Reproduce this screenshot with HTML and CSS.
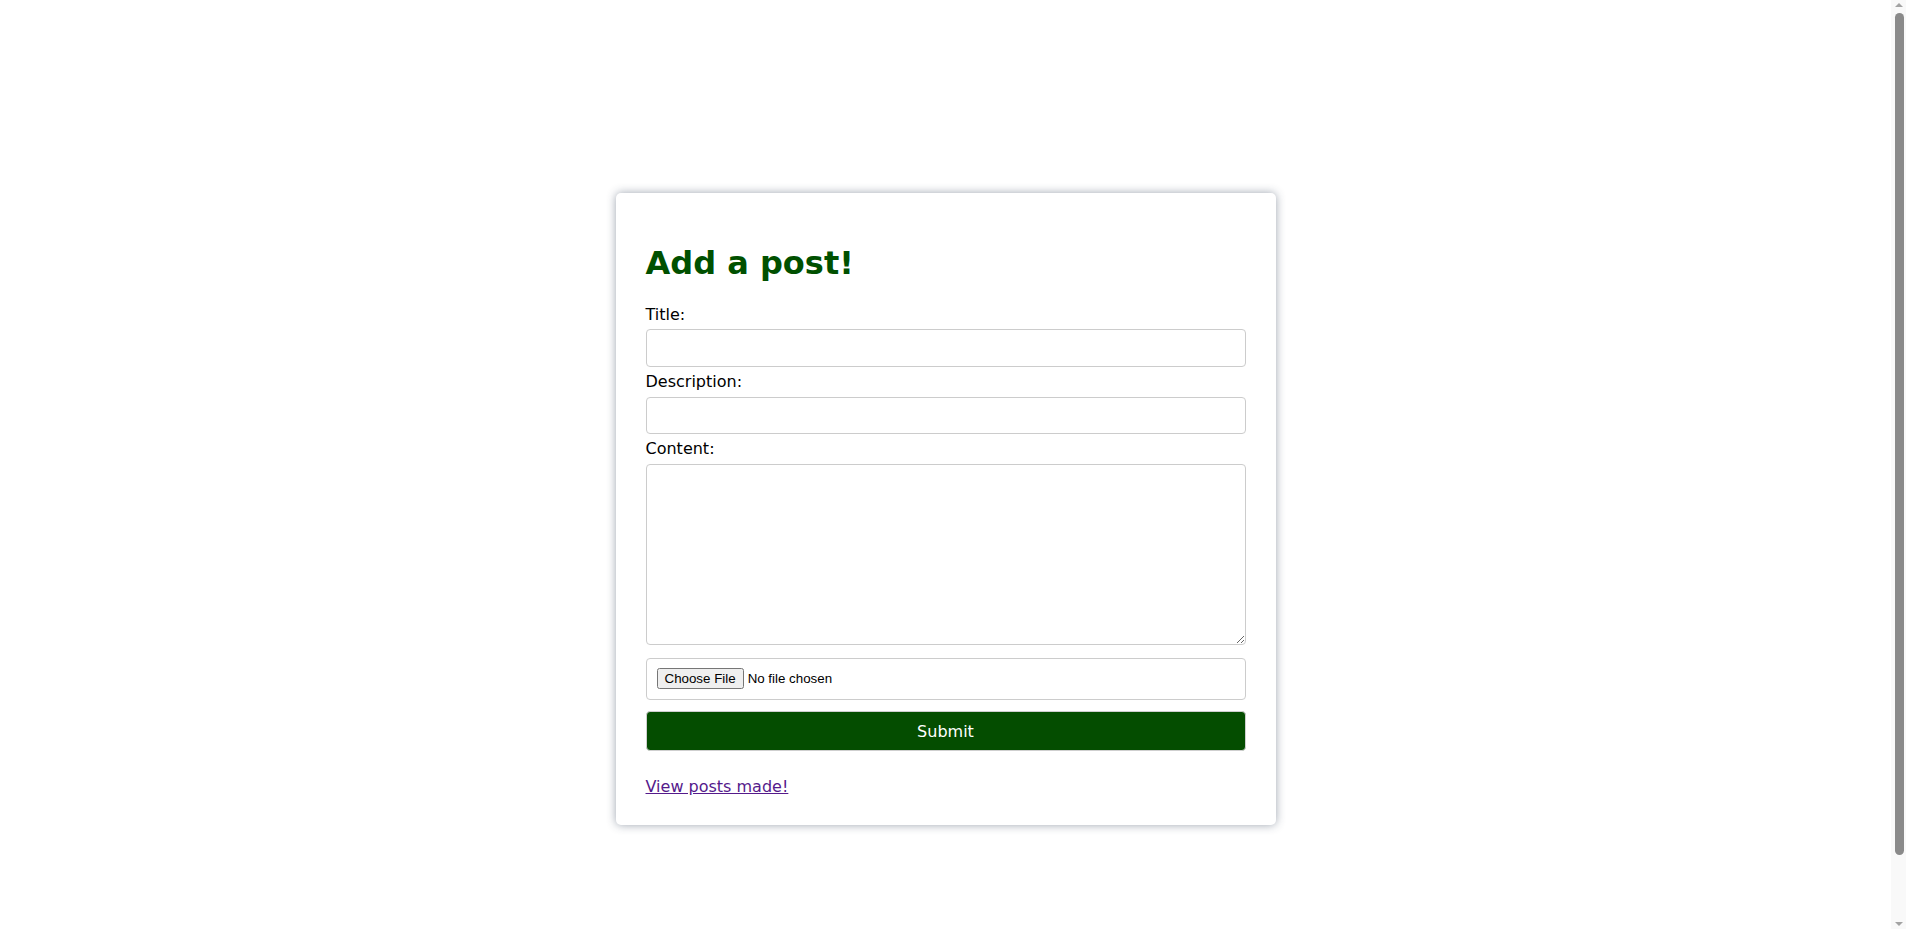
FILE: index.html
```html
<!DOCTYPE html>
<html lang="en">
<head>
<meta charset="utf-8">
<title>Add a post</title>
<link rel="stylesheet" href="styles.css">
</head>
<body>
<main class="page">
  <section class="card">
    <h1 class="card-title">Add a post!</h1>
    <form class="post-form">
      <label class="field-label" for="title">Title:</label>
      <input class="field-input" type="text" id="title" name="title">
      <label class="field-label" for="description">Description:</label>
      <input class="field-input" type="text" id="description" name="description">
      <label class="field-label" for="content">Content:</label>
      <textarea class="field-area" id="content" name="content"></textarea>
      <div class="file-box">
        <input class="file-input" type="file" name="image">
      </div>
      <button class="submit-btn" type="submit">Submit</button>
    </form>
    <a class="posts-link" href="#">View posts made!</a>
  </section>
</main>
<div class="fake-scrollbar" aria-hidden="true">
  <span class="sb-arrow sb-up"></span>
  <span class="sb-thumb"></span>
  <span class="sb-arrow sb-down"></span>
</div>
</body>
</html>
```
FILE: styles.css
```css
html, body {
  margin: 0;
  padding: 0;
  background: #ffffff;
}

body {
  font-family: "DejaVu Sans", Verdana, sans-serif;
  font-size: 16px;
  color: #000;
}

.page {
  width: calc(100vw - 15px);
  min-height: 1018px;
  display: flex;
  align-items: center;
  justify-content: center;
}

.card {
  box-sizing: border-box;
  width: 660px;
  height: 632px;
  padding: 30px 30px 0;
  background: #fff;
  border-radius: 5px;
  box-shadow: 0 0 10px rgba(40, 55, 80, 0.45);
  display: flex;
  flex-direction: column;
}

.card-title {
  margin: 22px 0 23.6px;
  font-size: 32px;
  font-weight: bold;
  line-height: 37.25px;
  color: #005000;
}

.post-form {
  display: flex;
  flex-direction: column;
}

.field-label {
  display: block;
  line-height: 18.6px;
}

.field-input,
.field-area {
  box-sizing: border-box;
  width: 600px;
  margin: 5px 0 6px;
  padding: 8px;
  border: 1px solid #cccccc;
  border-radius: 4px;
  font-family: "DejaVu Sans", Verdana, sans-serif;
  font-size: 16px;
  background: #fff;
}

.field-input {
  height: 37.5px;
}

.field-area {
  height: 181px;
  margin-bottom: 13.3px;
  resize: vertical;
}

.file-box {
  box-sizing: border-box;
  width: 600px;
  height: 42px;
  padding: 10px;
  border: 1px solid #cccccc;
  border-radius: 4px;
  display: flex;
  align-items: center;
}

.file-input {
  font-family: "Liberation Sans", Arial, sans-serif;
  font-size: 13.333px;
}

.submit-btn {
  box-sizing: border-box;
  width: 600px;
  height: 39.5px;
  margin-top: 11.4px;
  border: 1px solid #cfcfcf;
  border-radius: 4px;
  background: #044d00;
  color: #fff;
  font-family: "DejaVu Sans", Verdana, sans-serif;
  font-size: 16px;
  cursor: pointer;
}

.posts-link {
  align-self: flex-start;
  margin-top: 27px;
  line-height: 18.6px;
  color: #551a8b;
  text-decoration: underline;
}

/* decorative browser scrollbar as seen in the reference */
.fake-scrollbar {
  position: fixed;
  top: 0;
  right: 0;
  width: 15px;
  height: 100vh;
  background: #f9f9f9;
}

.sb-thumb {
  position: absolute;
  top: 13px;
  left: 4px;
  width: 9px;
  height: 842px;
  border-radius: 5px;
  background: #8a8a8a;
}

.sb-arrow {
  position: absolute;
  left: 4px;
  width: 0;
  height: 0;
  border-left: 4px solid transparent;
  border-right: 4px solid transparent;
}

.sb-up {
  top: 3px;
  border-bottom: 4px solid #a3a3a3;
}

.sb-down {
  bottom: 3px;
  border-top: 4px solid #a3a3a3;
}
```
